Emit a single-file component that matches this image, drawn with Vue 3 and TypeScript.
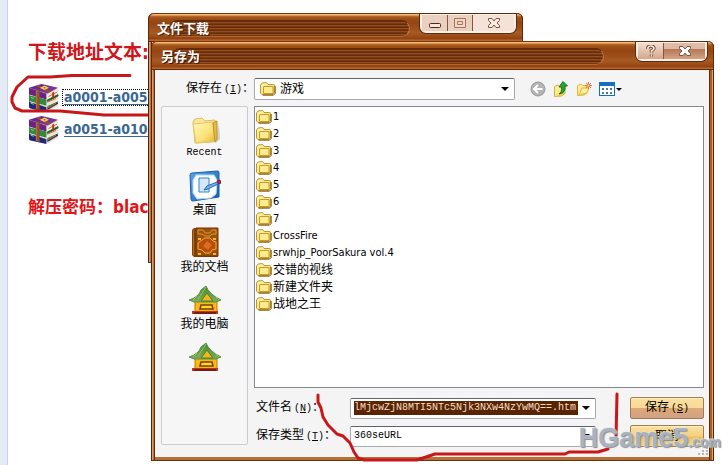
<script setup lang="ts">
import { ref } from 'vue'

interface Place {
  label: string
  icon: 'folder' | 'desktop' | 'book' | 'house'
}

const folders: string[] = [
  '1', '2', '3', '4', '5', '6', '7',
  'CrossFire', 'srwhjp_PoorSakura vol.4',
  '交错的视线', '新建文件夹', '战地之王',
]

const places: Place[] = [
  { label: 'Recent', icon: 'folder' },
  { label: '桌面', icon: 'desktop' },
  { label: '我的文档', icon: 'book' },
  { label: '我的电脑', icon: 'house' },
  { label: '', icon: 'house' },
]

const archives: string[] = ['a0001-a0050', 'a0051-a0100']
const fileName = ref('lMjcwZjN8MTI5NTc5Njk3NXw4NzYwMQ==.htm')

const isWestern = (name: string): boolean => /^[\x20-\x7e]+$/.test(name)
</script>

<template>
  <div class="page">
    <svg class="defs" aria-hidden="true">
      <defs>
        <linearGradient id="gold" x1="0" y1="0" x2="1" y2="1">
          <stop offset="0" stop-color="#fff8b8" />
          <stop offset="0.6" stop-color="#fbe27a" />
          <stop offset="1" stop-color="#e3b53a" />
        </linearGradient>
        <linearGradient id="purple" x1="0" y1="0" x2="1" y2="1">
          <stop offset="0" stop-color="#5c1b80" />
          <stop offset="1" stop-color="#8d3fae" />
        </linearGradient>
        <linearGradient id="roof" x1="0" y1="0" x2="0" y2="1">
          <stop offset="0" stop-color="#3e8a35" />
          <stop offset="1" stop-color="#86ad5a" />
        </linearGradient>
        <linearGradient id="blue" x1="0" y1="0" x2="1" y2="1">
          <stop offset="0" stop-color="#5aa9ea" />
          <stop offset="1" stop-color="#1559ad" />
        </linearGradient>
        <symbol id="small-folder" viewBox="0 0 16 16">
          <path d="M.5 4 2 2l4.500-.5L8 3.500h5.500q1 0 1 1V12L13 13.500H2L.5 12z" fill="url(#gold)" stroke="#bd9630" />
          <path d="M3.500 12.500V6q0-.5.5-.5h9v7z" fill="#fdeb90" stroke="#c69c2c" />
          <path d="M15.200 5v7.500L13.500 14.200H2.500" fill="none" stroke="#7d5b14" />
        </symbol>
      </defs>
    </svg>

    <main class="article">
      <h1 class="heading">下载地址文本:</h1>
      <ul class="archives">
        <li v-for="(name, i) in archives" :key="name">
          <svg class="archive-icon" viewBox="0 0 32 30" aria-hidden="true">
            <path d="M1 19 20 24 31 19v5L20 29.500 2 25z" fill="#e9e2cf" />
            <path d="M1 19v5.500q0 1.500 1.500 2L19 30v-5z" fill="#20277c" />
            <path d="M20 25 31 20v1.500L20 28z" fill="#252462" />
            <path d="M1 13l19 4 11-5v6L20 24.500 2 20z" fill="#eee7d3" />
            <path d="M1 12v6.500L19 23.500V17z" fill="#2e8a3d" />
            <path d="M20 17 31 12v1.500L20 19zM20 24.500 31 19.500" fill="#1b6128" stroke="#1b6128" />
            <path d="M1 6l19 5 11-6v6L20 17 2 13z" fill="#f3ead5" />
            <path d="M1 5 14 1l17 4-11 6z" fill="url(#purple)" />
            <path d="M1 5v7l18 5v-6z" fill="#692387" />
            <path d="M8 3 11 2l13 6.500-3 1.500zM8 7l4 1v20l-4-1z" fill="#93502a" />
            <path d="M9 7v20M20 26l9-5M20 20l9-4M21 14l9-4.500" stroke="#bd7842" fill="none" />
            <path d="M14 5l3-1.500 3 1.500-3 1.500z" fill="none" stroke="#f7cf5a" stroke-width="1.500" />
            <path d="M25 10v7l2-1.500V9z" fill="#c82620" />
            <path d="M3 15l3 1M3 21l3 1" stroke="#8ed390" />
          </svg>
          <a href="#" class="archive-link" :class="{ focused: i === 0 }">{{ name }}</a>
        </li>
      </ul>
      <p class="password">解压密码：black</p>
      <svg class="mark-left" viewBox="0 0 150 50" aria-hidden="true">
        <path d="M130 5.500H72L50 7H28L17 17l-5 10v5l3 6 7 3h38l22 2 22 2h46" />
      </svg>
    </main>

    <section class="window download" aria-label="文件下载">
      <header class="title-bar">
        <h2>文件下载</h2>
        <span class="groove"></span>
        <div class="caption-buttons">
          <button type="button" class="minimise" aria-label="最小化">
            <svg viewBox="0 0 14 12"><rect x="1.500" y="6.500" width="11" height="4" rx="1" fill="#f6e5da" stroke="#4b2a1a" /></svg>
          </button>
          <button type="button" class="maximise" aria-label="最大化">
            <svg viewBox="0 0 14 12"><path d="M1.500 1.500h11v9h-11zM4.500 4.500h5v3h-5z" fill="#eed8ca" stroke="#a87358" /></svg>
          </button>
          <button type="button" class="close" aria-label="关闭">
            <svg viewBox="0 0 14 12"><path d="M1.500 1.500h3.500L7 4l2-2.500h3.500v2L10 6l2.500 2.500v2H9L7 8l-2 2.500H1.500v-2L4 6 1.500 3.500z" fill="#fbece3" stroke="#825440" /></svg>
          </button>
        </div>
      </header>
      <div class="window-body"></div>
    </section>

    <section class="window save" aria-label="另存为">
      <header class="title-bar">
        <h2>另存为</h2>
        <span class="groove"></span>
        <div class="caption-buttons">
          <button type="button" class="help" aria-label="帮助">
            <svg viewBox="0 0 14 12"><path d="M4 4V2.500Q4.500 1 7 1t3 2.200Q10 4.500 7.500 6v1.500M7.500 9.500v2" fill="none" stroke="#70402a" stroke-width="3.400" /><path d="M4 4V2.500Q4.500 1 7 1t3 2.200Q10 4.500 7.500 6v1.500M7.500 9.500v2" fill="none" stroke="#fff0e5" stroke-width="1.600" /></svg>
          </button>
          <button type="button" class="close" aria-label="关闭">
            <svg viewBox="0 0 14 12"><path d="M1.500 1.500h3.500L7 4l2-2.500h3.500v2L10 6l2.500 2.500v2H9L7 8l-2 2.500H1.500v-2L4 6 1.500 3.500z" fill="#fff" stroke="#825440" /></svg>
          </button>
        </div>
      </header>

      <div class="window-body">
        <div class="look-in">
          <label for="look-in">保存在<span class="key">(<u>I</u>)</span>：</label>
          <div class="combo with-icon">
            <svg class="combo-icon" aria-hidden="true"><use href="#small-folder" /></svg>
            <select id="look-in"><option>游戏</option></select>
            <svg class="arrow" viewBox="0 0 8 4" aria-hidden="true"><path d="M0 0h8L4 4z" /></svg>
          </div>
          <div class="tools">
            <button type="button" aria-label="后退">
              <svg viewBox="0 0 16 16"><circle cx="8" cy="8" r="7" fill="#b4b4b4" stroke="#999" /><path d="M12.500 8H4M8 4 4 8l4 4" fill="none" stroke="#fff" stroke-width="2" /></svg>
            </button>
            <button type="button" aria-label="向上一级">
              <svg viewBox="0 0 16 16"><path d="M1.500 5.500 5 4l1 1.500 6-1v8L8.500 15l-7 .5z" fill="url(#gold)" stroke="#d2b23d" /><path d="M6 13q3-1 2.500-7H6l4-5.500L14.500 5H12q1 7-6 8z" fill="#29a436" stroke="#17751f" /></svg>
            </button>
            <button type="button" aria-label="新建文件夹">
              <svg viewBox="0 0 16 16"><path d="M1.500 4.500 5 3l1.500 1.500H11v7L8.500 14l-7 .5z" fill="url(#gold)" stroke="#dfbb46" /><path d="M3 14 6 7h7l-2 5z" fill="#ffed93" stroke="#e1b94b" /><path d="M12.500 1v7M9 4.500h7M10 2l5 5m0-5-5 5" stroke="#e66d35" /><circle cx="12.500" cy="4.500" r="1" fill="#fff4a5" /></svg>
            </button>
            <button type="button" class="views" aria-label="查看">
              <svg viewBox="0 0 16 16"><rect x=".5" y="1.500" width="15" height="13" fill="#fff" stroke="#176dc0" /><path d="M0 1h16v4H0z" fill="#176dc0" /><path d="M3 7h2v2H3zm8 0h2v2h-2zM7 11h2v2H7z" fill="#596a80" /><path d="M7 7h2v2H7zm-4 4h2v2H3zm8 0h2v2h-2z" fill="#2d91a0" /></svg>
              <svg class="tiny-arrow" viewBox="0 0 6 3"><path d="M0 0h6L3 3z" /></svg>
            </button>
          </div>
        </div>

        <div class="browser">
          <nav class="places" aria-label="位置">
            <button v-for="(place, i) in places" :key="i" type="button" class="place" :aria-label="place.label || '位置'">
              <svg v-if="place.icon === 'folder'" viewBox="0 0 32 32" aria-hidden="true">
                <path d="M6 30h20l4-19 1 15-4 4z" fill="#aaa" opacity=".5" />
                <path d="M4 9 6 6l7-1 3 3 10-1 1 19-3 3-18 1z" fill="#fae69a" stroke="#ddbd55" />
                <path d="M4 11 24 9l2 19-19 2z" fill="url(#gold)" stroke="#e6c765" />
                <path d="M24 10l4-2v18l-2 3z" fill="#e8bb46" stroke="#bb8f2d" />
              </svg>
              <svg v-else-if="place.icon === 'desktop'" viewBox="0 0 32 32" aria-hidden="true">
                <path d="M3 3 29 1q1 0 1 2v24L4 31q-2 0-2-2L1 5q0-2 2-2z" fill="url(#blue)" stroke="#1761ae" />
                <path d="M7 5h18l3 5-1 14-5 4-14 1-4-6V10z" fill="#fff" stroke="#b4d8f2" />
                <path d="M10 8h10v14H10z" fill="#d3e9fb" stroke="#3583c9" />
                <path d="m15 20 3-4 10-4 1 2-10 5z" fill="#79b2e5" stroke="#2468b3" />
                <path d="m28 11 3-1 1 3-2 1z" fill="#ca2745" stroke="#8b1535" />
              </svg>
              <svg v-else-if="place.icon === 'book'" viewBox="0 0 32 32" aria-hidden="true">
                <path d="M5 1h24v29H5l-2-2V3z" fill="#82430d" />
                <path d="M7 1h22v28H7z" fill="#9b5210" stroke="#6e3006" />
                <path d="M9 3h5l2 3h5l2-3h4v4h-4l-2 2h-5l-3-2H9z" fill="none" stroke="#e09a20" />
                <path d="m13 13 3-2h5l3 3 3 1v7l-4 1-2 3h-5l-3-3-4-1v-6z" fill="#b84d12" stroke="#f3b120" />
                <path d="m18 14 5 4-4 5-5-4z" fill="#dc6c20" />
                <path d="M9 12h3M9 27h3m12 0h3m-3-15h3" fill="none" stroke="#f1b537" stroke-width="2" />
                <path d="M4.500 3v25" stroke="#b56d1c" />
              </svg>
              <svg v-else viewBox="0 0 32 32" aria-hidden="true">
                <path d="M6 17h22v12H6z" fill="#f8b911" stroke="#c47909" />
                <path d="M3 27h26v3H3z" fill="#c2331d" /><path d="M5 29h22" stroke="#781c16" stroke-width="2" />
                <path d="M17 2q3 8 15 14l-5 2H5l-5-2q10-3 12-10z" fill="url(#roof)" stroke="#5b8f49" />
                <path d="m18 9 6 8H12z" fill="#f2b812" stroke="#477e38" />
                <path d="M17 3 9 15M8 12l-4 4m23-3 3 3" stroke="#9bc25f" fill="none" />
                <path d="M12 21h11l1 4H11z" fill="#ffdc22" stroke="#7d3b0d" stroke-width="1.500" />
              </svg>
              <span :class="{ latin: place.label === 'Recent' }">{{ place.label }}</span>
            </button>
          </nav>

          <div class="content">
            <ul class="files">
              <li v-for="name in folders" :key="name">
                <svg aria-hidden="true"><use href="#small-folder" /></svg>
                <span :class="{ western: isWestern(name) }">{{ name }}</span>
              </li>
            </ul>
            <form class="fields" @submit.prevent>
              <label for="file-name">文件名<span class="key">(<u>N</u>)</span>：</label>
              <div class="combo">
                <input id="file-name" v-model="fileName" type="text" spellcheck="false" />
                <svg class="arrow" viewBox="0 0 8 4" aria-hidden="true"><path d="M0 0h8L4 4z" /></svg>
              </div>
              <button type="submit" class="action">保存<span class="key">(<u>S</u>)</span></button>
              <label for="file-type">保存类型<span class="key">(<u>T</u>)</span>：</label>
              <div class="combo">
                <select id="file-type" class="latin"><option>360seURL</option></select>
                <svg class="arrow" viewBox="0 0 8 4" aria-hidden="true"><path d="M0 0h8L4 4z" /></svg>
              </div>
              <button type="button" class="action">取消</button>
            </form>
          </div>
        </div>
        <svg class="grip" viewBox="0 0 10 10" aria-hidden="true"><path d="M8 1h2v2H8zM4 4h2v2H4zm4 0h2v2H8zM0 7h2v2H0zm4 0h2v2H4zm4 0h2v2H8z" fill="#b9b7b2" /></svg>
      </div>
    </section>

    <svg class="mark-bottom" viewBox="0 0 310 75" aria-hidden="true">
      <path d="M8 5v7l3 6 2 9 5 8 9 9 6 2 7 7 4 9 4 6 6 2h53l9-3 9-3h130l4-2h29l10-3M307 4l-1 45" />
    </svg>
    <div class="watermark">HGame5<small>.com</small></div>
  </div>
</template>

<style>
body {
  margin: 0;
}
</style>

<style scoped>
* {
  box-sizing: border-box;
}

.page {
  position: relative;
  min-height: 100vh;
  overflow: hidden;
  background: #fff;
  border-left: 7px solid #e4ebf5;
  color: #000;
  font: 12px/16px "DejaVu Sans Condensed", "Noto Sans CJK SC", sans-serif;
}

.defs {
  position: absolute;
  width: 0;
  height: 0;
}

h1, h2, p, ul {
  margin: 0;
  padding: 0;
}

ul {
  list-style: none;
}

button {
  margin: 0;
  padding: 0;
  border: 0;
  background: none;
  color: inherit;
  font: inherit;
}

svg {
  display: block;
}

.article {
  min-height: 100vh;
  padding: 40px 0 0 20px;
  border-left: 1px solid #c0d3e8;
}

.heading {
  color: #cf171b;
  font-size: 19px;
  line-height: 24px;
}

.archives {
  padding-top: 17px;
}

.archives li {
  display: flex;
  align-items: center;
  gap: 4px;
  height: 32px;
}

.archive-icon {
  width: 31px;
  height: 29px;
}

.archive-link {
  padding: 0 1px;
  color: #3a6794;
  font-size: 14px;
  font-weight: bold;
  line-height: 15px;
  text-underline-offset: 2px;
}

.archive-link.focused {
  outline: 1px dotted #000;
}

.password {
  padding-top: 49px;
  color: #e01517;
  font-size: 17px;
  font-weight: bold;
  line-height: 26px;
}

.mark-left,
.mark-bottom {
  position: absolute;
  fill: none;
  stroke: #c81719;
  stroke-width: 3px;
  stroke-linecap: round;
  stroke-linejoin: round;
  pointer-events: none;
}

.mark-left {
  top: 70px;
  left: -7px;
  width: 150px;
  height: 50px;
}

.mark-bottom {
  top: 390px;
  left: 303px;
  width: 310px;
  height: 75px;
}

.window {
  position: absolute;
  padding: 0 5px 4px 4px;
  border-radius: 6px 6px 0 0;
  background: linear-gradient(90deg, #572307 0 1px, #d69b69 1px 2px, #b67543 2px 3px, #63270a 3px 4px, #b66f34 4px calc(100% - 5px), #63270a calc(100% - 5px) calc(100% - 4px), #a85c26 calc(100% - 4px) calc(100% - 2px), #e1a46a calc(100% - 2px) calc(100% - 1px), #572307 calc(100% - 1px));
  box-shadow: inset 0 -1px #6b310d;
}

.download {
  top: 13px;
  left: 141px;
  width: 375px;
}

.download .window-body {
  min-height: 217px;
}

.save {
  top: 41px;
  right: 14px;
  left: 144px;
}

.title-bar {
  display: flex;
  align-items: flex-start;
  height: 29px;
  margin: 0 -5px 0 -4px;
  padding: 0 6px 0 9px;
  border: 1px solid #642609;
  border-top-color: #743512;
  border-radius: 6px 6px 0 0;
  background: linear-gradient(#f5bb79 0 1px, #bd6b2a 2px, #9e5018 4px, #944512 9px, #a75a23 19px, #91410e 25px, #b46a31 26px);
}

.download .title-bar {
  padding-left: 8px;
}

.title-bar h2 {
  position: relative;
  z-index: 1;
  margin-top: 7px;
  color: #fff;
  font-size: 13px;
  line-height: 16px;
  text-shadow: 1px 1px #4b1b04;
}

.groove {
  flex: 1;
  height: 17px;
  margin: 6px 32px 0 -28px;
  border: 1px solid #65290b;
  border-right-color: #c37a43;
  border-bottom-color: #b06430;
  border-radius: 9px;
  background: repeating-linear-gradient(#672b0c 0 1px, #92501e 1px 2px, #783611 2px 3px);
}

.download .groove {
  margin-right: 10px;
  margin-left: -40px;
}

.caption-buttons {
  display: flex;
  height: 19px;
  border: 2px solid #fff0df;
  border-top-width: 1px;
  border-radius: 0 0 6px 6px;
  background: #d5a88d;
  box-shadow: 0 0 0 1px #5d2b15;
}

.caption-buttons button {
  display: grid;
  place-items: center;
  width: 25px;
  background: linear-gradient(#f2ded3, #d3a78e);
}

.caption-buttons button + button {
  border-left: 1px solid #8c5336;
}

.caption-buttons .close {
  width: 42px;
  background: linear-gradient(#dfbba7 0 35%, #b67757 40%, #d3a488);
}

.download .caption-buttons button {
  background: #ead0c1;
}

.download .caption-buttons .close {
  background: #f4e2d8;
}

.caption-buttons svg {
  width: 14px;
  height: 12px;
}

.window-body {
  position: relative;
  padding: 8px 5px 10px 6px;
  background: #f4f4f4;
}

.look-in {
  display: flex;
  align-items: center;
  padding-bottom: 6px;
}

.look-in > label {
  width: 93px;
  padding-left: 25px;
  white-space: nowrap;
}

.look-in .combo {
  flex: 1;
}

.key,
.latin {
  font-family: "Liberation Mono", monospace;
  font-size: 10px;
}

.key {
  margin-left: 2px;
}

.combo {
  display: flex;
  align-items: center;
  gap: 4px;
  min-width: 0;
  height: 22px;
  padding: 0 5px 0 3px;
  border: 1px solid #a5a9ad;
  border-top-color: #5f646b;
  border-radius: 2px;
  background: #fff;
}

.with-icon {
  padding-left: 5px;
}

.combo-icon {
  width: 16px;
  height: 16px;
}

.combo select,
.combo input {
  flex: 1;
  min-width: 0;
  height: 16px;
  margin: 0;
  padding: 0;
  border: 0;
  outline: 0;
  appearance: none;
  background: transparent;
  color: #000;
  font: inherit;
}

.combo input,
.combo select.latin {
  font-family: "Liberation Mono", monospace;
  font-size: 10px;
}

.combo input {
  height: 14px;
  background: #592403;
  color: #f7dfc4;
}

.arrow {
  width: 8px;
  height: 4px;
}

.tools {
  display: flex;
  gap: 7px;
  width: 189px;
  padding-left: 15px;
}

.tools button svg {
  width: 16px;
  height: 16px;
}

.tools .views {
  display: flex;
  align-items: center;
  gap: 1px;
}

.tools .views .tiny-arrow {
  width: 6px;
  height: 3px;
}

.browser {
  display: flex;
  gap: 6px;
}

.places {
  width: 87px;
  margin-bottom: 2px;
  padding-top: 6px;
  border: 1px solid #c9ccd0;
  border-radius: 2px;
  background: #f6f6f6;
}

.place {
  display: flex;
  flex-direction: column;
  align-items: center;
  width: 100%;
  height: 57px;
  line-height: 16px;
}

.place svg {
  flex: none;
  width: 32px;
  height: 32px;
}

.content {
  flex: 1;
  min-width: 0;
}

.files {
  min-height: 282px;
  padding: 1px;
  border: 1px solid #85898e;
  background: #fff;
}

.files li {
  display: flex;
  align-items: center;
  gap: 1px;
  height: 17px;
}

.files svg {
  width: 16px;
  height: 16px;
}

.western {
  font-size: 11px;
}

.fields {
  display: grid;
  grid-template-columns: 96px 1fr 74px;
  row-gap: 6px;
  align-items: center;
  padding-top: 9px;
}

.fields label {
  padding-left: 2px;
  white-space: nowrap;
}

.fields .combo {
  height: 21px;
  margin-right: 34px;
}

.action {
  height: 22px;
  border: 1px solid #a27a55;
  border-radius: 2px;
  background: linear-gradient(#fbe0a0, #f9d998 48%, #dda978 52%, #d1a184);
  box-shadow: inset 0 1px #fff0bd;
}

.action:last-child {
  background: linear-gradient(#fbe0a0, #f5d180 50%, #ecc15e 55%, #f7d680);
}

.grip {
  position: absolute;
  right: 1px;
  bottom: 1px;
  width: 10px;
  height: 10px;
}

.watermark {
  position: absolute;
  right: 7px;
  bottom: 8px;
  color: #a9b2bd;
  font: bold 27px/30px "Liberation Sans", sans-serif;
  -webkit-text-stroke: 1px #dfe4e8;
  paint-order: stroke fill;
  text-shadow: 1px 1px 1px #8b8f94;
  white-space: nowrap;
  pointer-events: none;
}

.watermark small {
  font-size: 14px;
}
</style>
